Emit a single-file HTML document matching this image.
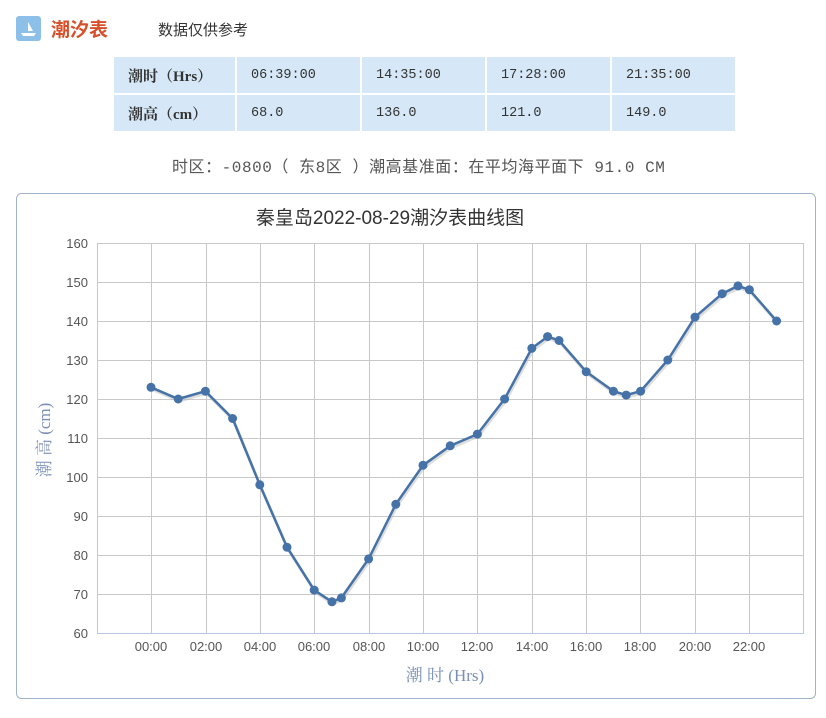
<!DOCTYPE html>
<html><head><meta charset="utf-8"><style>
body{margin:0;width:826px;height:718px;background:#fff;overflow:hidden;position:relative;font-family:"Liberation Sans","Noto Sans CJK SC",sans-serif}
.a{position:absolute}
.icon{left:16px;top:16px;width:25px;height:25px;background:#8dc0e8;border-radius:3px}
.title{left:51px;top:15px;font-size:19px;color:#d8502a;font-weight:bold}
.note{left:158px;top:19px;font-size:15px;color:#333}
table{position:absolute;left:112px;top:55px;border-collapse:collapse}
td{background:#d6e8f7;border:2px solid #fff;height:36px;padding:0 0 0 14px;font-family:"Liberation Mono","Noto Sans CJK SC",monospace;font-size:13.5px;color:#333;white-space:nowrap}
td.h{font-weight:bold;font-family:"Liberation Serif","Noto Serif CJK SC",serif;font-size:15px;width:107px}
td.c{width:109px}
.tz{left:172px;top:153px;font-size:16px;color:#555;font-family:"Liberation Mono","Noto Sans CJK SC",monospace;letter-spacing:0.55px;white-space:nowrap}
</style></head><body>
<div class="a icon"><svg width="25" height="25"><path d="M12 6v9h5z" fill="#fff"/><path d="M5 17h15l-2 3H7z" fill="#fff"/></svg></div>
<div class="a title">潮汐表</div>
<div class="a note">数据仅供参考</div>
<table>
<tr><td class="h">潮时（Hrs）</td><td class="c">06:39:00</td><td class="c">14:35:00</td><td class="c">17:28:00</td><td class="c">21:35:00</td></tr>
<tr><td class="h">潮高（cm）</td><td class="c">68.0</td><td class="c">136.0</td><td class="c">121.0</td><td class="c">149.0</td></tr>
</table>
<div class="a tz">时区：-0800（ 东8区 ）潮高基准面：在平均海平面下 91.0 CM</div>
<svg class="a" style="left:0;top:0" width="826" height="718" font-family="Liberation Sans,Noto Sans CJK SC,sans-serif">
<rect x="16.5" y="193.5" width="799" height="505" rx="5" fill="none" stroke="#9fb4cc"/>
<text x="390" y="224" text-anchor="middle" font-size="19" fill="#333">秦皇岛2022-08-29潮汐表曲线图</text>
<g stroke="#c8c8c8" stroke-width="1">
<line x1="97" y1="243.5" x2="804" y2="243.5"/><line x1="97" y1="282.5" x2="804" y2="282.5"/><line x1="97" y1="321.5" x2="804" y2="321.5"/><line x1="97" y1="360.5" x2="804" y2="360.5"/><line x1="97" y1="399.5" x2="804" y2="399.5"/><line x1="97" y1="438.5" x2="804" y2="438.5"/><line x1="97" y1="477.5" x2="804" y2="477.5"/><line x1="97" y1="516.5" x2="804" y2="516.5"/><line x1="97" y1="555.5" x2="804" y2="555.5"/><line x1="97" y1="594.5" x2="804" y2="594.5"/>
<line x1="97.5" y1="243" x2="97.5" y2="633"/><line x1="151.5" y1="243" x2="151.5" y2="633"/><line x1="206.5" y1="243" x2="206.5" y2="633"/><line x1="260.5" y1="243" x2="260.5" y2="633"/><line x1="314.5" y1="243" x2="314.5" y2="633"/><line x1="369.5" y1="243" x2="369.5" y2="633"/><line x1="423.5" y1="243" x2="423.5" y2="633"/><line x1="477.5" y1="243" x2="477.5" y2="633"/><line x1="532.5" y1="243" x2="532.5" y2="633"/><line x1="586.5" y1="243" x2="586.5" y2="633"/><line x1="640.5" y1="243" x2="640.5" y2="633"/><line x1="695.5" y1="243" x2="695.5" y2="633"/><line x1="749.5" y1="243" x2="749.5" y2="633"/><line x1="803.5" y1="243" x2="803.5" y2="633"/>
</g>
<line x1="97" y1="633.5" x2="804" y2="633.5" stroke="#b8c8e0"/>
<g font-size="13" fill="#555" text-anchor="end">
<text x="88" y="248">160</text><text x="88" y="287">150</text><text x="88" y="326">140</text><text x="88" y="365">130</text><text x="88" y="404">120</text><text x="88" y="443">110</text><text x="88" y="482">100</text><text x="88" y="521">90</text><text x="88" y="560">80</text><text x="88" y="599">70</text><text x="88" y="638">60</text>
</g>
<g font-size="13" fill="#555" text-anchor="middle">
<text x="151" y="651">00:00</text><text x="206" y="651">02:00</text><text x="260" y="651">04:00</text><text x="314" y="651">06:00</text><text x="369" y="651">08:00</text><text x="423" y="651">10:00</text><text x="477" y="651">12:00</text><text x="532" y="651">14:00</text><text x="586" y="651">16:00</text><text x="640" y="651">18:00</text><text x="695" y="651">20:00</text><text x="749" y="651">22:00</text>
</g>
<text x="445" y="681" text-anchor="middle" font-size="17" fill="#7a8fb8" font-family="Liberation Serif,Noto Serif CJK SC,serif">潮 时 (Hrs)</text>
<text transform="translate(50,440) rotate(-90)" text-anchor="middle" font-size="17" fill="#7a8fb8" font-family="Liberation Serif,Noto Serif CJK SC,serif">潮 高 (cm)</text>
<polyline fill="none" stroke="#bbb" stroke-width="3" opacity="0.5" transform="translate(1,2)" points="151,387.3 178.2,399 205.4,391.2 232.6,418.5 259.8,484.8 287,547.2 314.2,590.1 331.9,601.8 341.4,597.9 368.6,558.9 395.8,504.3 423,465.3 450.2,445.8 477.4,434.1 504.6,399 531.8,348.3 547.6,336.6 559,340.5 586.2,371.7 613.4,391.2 626.2,395.1 640.6,391.2 667.8,360 695,317.1 722.2,293.7 738,285.9 749.4,289.8 776.6,321"/>
<polyline fill="none" stroke="#4572a7" stroke-width="2.5" points="151,387.3 178.2,399 205.4,391.2 232.6,418.5 259.8,484.8 287,547.2 314.2,590.1 331.9,601.8 341.4,597.9 368.6,558.9 395.8,504.3 423,465.3 450.2,445.8 477.4,434.1 504.6,399 531.8,348.3 547.6,336.6 559,340.5 586.2,371.7 613.4,391.2 626.2,395.1 640.6,391.2 667.8,360 695,317.1 722.2,293.7 738,285.9 749.4,289.8 776.6,321"/>
<g fill="#4572a7">
<circle cx="151" cy="387.3" r="4.5"/><circle cx="178.2" cy="399" r="4.5"/><circle cx="205.4" cy="391.2" r="4.5"/><circle cx="232.6" cy="418.5" r="4.5"/><circle cx="259.8" cy="484.8" r="4.5"/><circle cx="287" cy="547.2" r="4.5"/><circle cx="314.2" cy="590.1" r="4.5"/><circle cx="331.9" cy="601.8" r="4.5"/><circle cx="341.4" cy="597.9" r="4.5"/><circle cx="368.6" cy="558.9" r="4.5"/><circle cx="395.8" cy="504.3" r="4.5"/><circle cx="423" cy="465.3" r="4.5"/><circle cx="450.2" cy="445.8" r="4.5"/><circle cx="477.4" cy="434.1" r="4.5"/><circle cx="504.6" cy="399" r="4.5"/><circle cx="531.8" cy="348.3" r="4.5"/><circle cx="547.6" cy="336.6" r="4.5"/><circle cx="559" cy="340.5" r="4.5"/><circle cx="586.2" cy="371.7" r="4.5"/><circle cx="613.4" cy="391.2" r="4.5"/><circle cx="626.2" cy="395.1" r="4.5"/><circle cx="640.6" cy="391.2" r="4.5"/><circle cx="667.8" cy="360" r="4.5"/><circle cx="695" cy="317.1" r="4.5"/><circle cx="722.2" cy="293.7" r="4.5"/><circle cx="738" cy="285.9" r="4.5"/><circle cx="749.4" cy="289.8" r="4.5"/><circle cx="776.6" cy="321" r="4.5"/>
</g>
</svg>
</body></html>
